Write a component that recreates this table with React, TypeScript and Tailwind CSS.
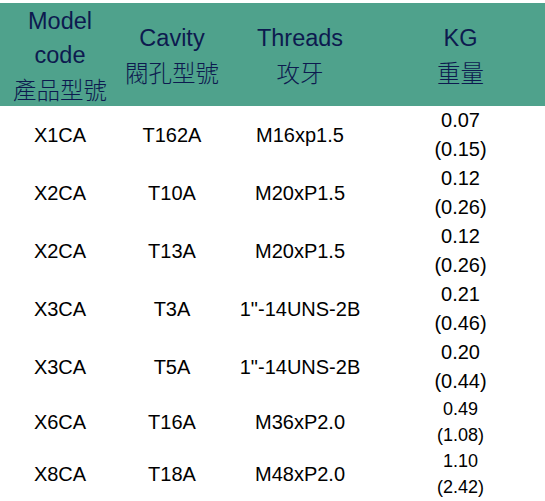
import React from 'react';

type Row = {
  model: string;
  cavity: string;
  thread: string;
  kg: string;
  lb: string;
  small?: boolean;
};

const rows: Row[] = [
  { model: 'X1CA', cavity: 'T162A', thread: 'M16xp1.5', kg: '0.07', lb: '(0.15)' },
  { model: 'X2CA', cavity: 'T10A', thread: 'M20xP1.5', kg: '0.12', lb: '(0.26)' },
  { model: 'X2CA', cavity: 'T13A', thread: 'M20xP1.5', kg: '0.12', lb: '(0.26)' },
  { model: 'X3CA', cavity: 'T3A', thread: '1"-14UNS-2B', kg: '0.21', lb: '(0.46)' },
  { model: 'X3CA', cavity: 'T5A', thread: '1"-14UNS-2B', kg: '0.20', lb: '(0.44)' },
  { model: 'X6CA', cavity: 'T16A', thread: 'M36xP2.0', kg: '0.49', lb: '(1.08)', small: true },
  { model: 'X8CA', cavity: 'T18A', thread: 'M48xP2.0', kg: '1.10', lb: '(2.42)', small: true },
];

const cols = 'grid grid-cols-[120px_104px_152px_1fr]';
const en = "font-['Liberation_Sans',Arial,sans-serif]";
const zh = "font-['Noto_Sans_CJK_TC','Noto_Sans_CJK_SC',sans-serif]";

const App = () => {
  return (
    <div className="w-[545px] h-[501px] bg-white pt-[3px] overflow-hidden">
      <div className={`${cols} h-[103px] bg-[#4fa28c] text-[#0d1a4f] text-[23.5px] leading-[34px] text-center`}>
        <div className="flex flex-col items-center justify-center">
          <span className={en}>Model</span>
          <span className={en}>code</span>
          <span className={`${zh} font-light`}>產品型號</span>
        </div>
        <div className="flex flex-col items-center justify-center">
          <span className={en}>Cavity</span>
          <span className={`${zh} font-light`}>閥孔型號</span>
        </div>
        <div className="flex flex-col items-center justify-center">
          <span className={en}>Threads</span>
          <span className={`${zh} font-light`}>攻牙</span>
        </div>
        <div className="flex flex-col items-center justify-center">
          <span className={en}>KG</span>
          <span className={`${zh} font-light`}>重量</span>
        </div>
      </div>

      <div className={`${en} text-black text-[20px]`}>
        {rows.map((r, i) => (
          <div key={i} className={`${cols} text-center items-center`}>
            <div>{r.model}</div>
            <div>{r.cavity}</div>
            <div>{r.thread}</div>
            <div
              className={
                r.small
                  ? 'flex flex-col text-[18px] leading-[26px]'
                  : 'flex flex-col leading-[29px]'
              }
            >
              <span>{r.kg}</span>
              <span>{r.lb}</span>
            </div>
          </div>
        ))}
      </div>
    </div>
  );
};

export default App;
